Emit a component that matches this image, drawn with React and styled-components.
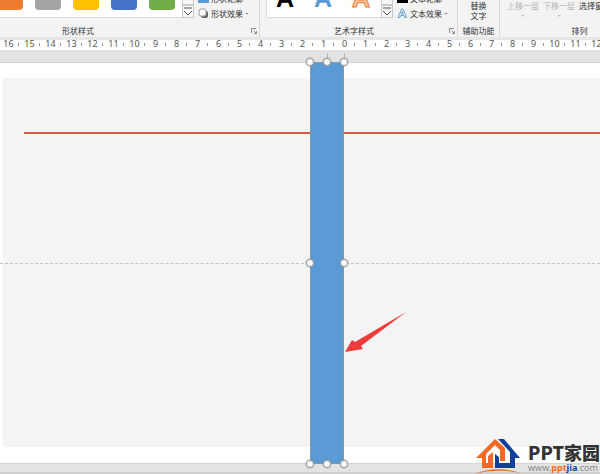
import styled, { createGlobalStyle } from "styled-components";

const GlobalStyle = createGlobalStyle`
  * {
    box-sizing: border-box;
  }
  body {
    margin: 0;
    font-family: "Liberation Sans", "Noto Sans CJK SC", sans-serif;
  }
`;

const Page = styled.div`
  height: 100vh;
  display: flex;
  flex-direction: column;
  position: relative;
  overflow: hidden;
  background-color: #e3e3e3;
`;

/* ribbon */
const Ribbon = styled.header`
  flex: none;
  display: flex;
  overflow: hidden;
  background-color: #f3f3f3;
  border-bottom: 3px solid #e6e6e6;
  font-family: "Noto Sans CJK SC", sans-serif;
  font-size: 8px;
  line-height: 11px;
  color: #333;
`;
const Group = styled.section`
  flex: 0 0 ${(props) => props.$width}px;
  display: flex;
  flex-direction: column;
  position: relative;
  padding-left: ${(props) => props.$pad || 0}px;
  border-right: 1px solid #d8d8d8;
`;
const GroupBody = styled.div`
  height: 19px;
  display: flex;
  align-items: flex-end;
  justify-content: ${(props) => (props.$center ? "center" : "flex-start")};
  gap: ${(props) => props.$gap || 0}px;
`;
const GroupFooter = styled.div`
  height: 18px;
  padding-top: 6px;
  text-align: center;
  margin-left: ${(props) => (props.$pull ? -props.$pull : 0)}px;
  margin-right: ${(props) => props.$end || 0}px;
`;
const Launcher = styled.button`
  position: absolute;
  right: 2px;
  bottom: 3px;
  width: 6px;
  height: 6px;
  padding: 0;
  border: none;
  background: none;
  display: flex;
`;
const Gallery = styled.div`
  flex: none;
  height: 40px;
  width: ${(props) => props.$width}px;
  margin-bottom: 1px;
  display: flex;
  align-items: flex-end;
  gap: 12px;
  padding: 0 0 ${(props) => props.$bottom}px ${(props) => props.$left}px;
  background-color: white;
  border: solid #dcdcdc;
  border-width: 0 0 1px ${(props) => (props.$edge ? 1 : 0)}px;
`;
const Swatch = styled.button`
  flex: none;
  width: 26px;
  height: 20px;
  padding: 0;
  border: none;
  border-radius: 4px;
  background-color: ${(props) => props.$color};
  &:first-child {
    margin-left: -3px;
  }
`;
const LetterButton = styled.button`
  width: 26px;
  height: 28px;
  padding: 0;
  border: none;
  background: none;
  font: bold 25px/28px "Liberation Sans", sans-serif;
  color: ${(props) => props.$color};
  -webkit-text-stroke: ${(props) => props.$stroke || "0"};
`;
const Scroller = styled.div`
  flex: none;
  width: 12px;
  height: 40px;
  margin-bottom: 1px;
  display: flex;
  flex-direction: column;
  justify-content: flex-end;
`;
const ScrollButton = styled.button`
  height: 13px;
  padding: 0;
  display: flex;
  align-items: center;
  justify-content: center;
  border: 1px solid #c9c9c9;
  background-color: #f6f6f6;
`;
const Commands = styled.div`
  display: flex;
  flex-direction: column;
  gap: 4px;
  padding-left: 4px;
`;
const Command = styled.button`
  display: flex;
  align-items: center;
  gap: 2px;
  height: 11px;
  padding: 0;
  border: none;
  background: none;
  font: inherit;
  color: #333;
  white-space: nowrap;
`;
const TallCommand = styled.button`
  flex: none;
  display: flex;
  flex-direction: column;
  align-items: center;
  height: 19px;
  padding: 1px 0 0;
  border: none;
  background: none;
  font: inherit;
  line-height: 10px;
  color: ${(props) => (props.disabled ? "#b4b4b4" : "#333")};
`;
const Caret = styled.span`
  width: 4px;
  height: 2px;
  margin-top: ${(props) => props.$top || 0}px;
  background-color: ${(props) => (props.$muted ? "#c4c4c4" : "#777")};
  clip-path: polygon(0 0, 100% 0, 50% 100%);
`;

/* ruler */
const Ruler = styled.div`
  flex: none;
  height: 10px;
  padding-bottom: 2px;
  display: flex;
  background-color: white;
  font: 9px/8px "Noto Sans", sans-serif;
  color: #555;
`;
const RulerUnit = styled.span`
  flex: 0 0 21px;
  display: flex;
  justify-content: center;
  align-items: center;
  position: relative;
  &:first-child {
    margin-left: -2px;
  }
  &::after {
    content: "";
    position: absolute;
    right: 0;
    width: 1px;
    height: 3px;
    background-color: #999;
  }
`;

/* slide */
const Workspace = styled.main`
  flex: 1;
  display: flex;
  flex-direction: column;
  padding: 12px 0 8px;
  border-bottom: 2px solid #cfcfcf;
`;
const Slide = styled.div`
  flex: 1;
  display: flex;
  position: relative;
  padding: 15px 0 16px 3px;
  background-color: white;
  border: solid #d2d2d2;
  border-width: 1px 0;
`;
const Panel = styled.div`
  flex: 1;
  background-color: #f4f4f4;
`;
const RedLine = styled.div`
  position: absolute;
  top: 69px;
  left: 24px;
  right: 0;
  height: 2px;
  background-color: #cf5d42;
`;
const Guide = styled.div`
  position: absolute;
  top: 50%;
  left: 0;
  right: 0;
  border-top: 1px dashed #c4c4c4;
`;
const Bar = styled.div`
  position: absolute;
  top: -1px;
  bottom: -1px;
  left: 310px;
  width: 34px;
  background-color: #5b9bd5;
  box-shadow: inset 0 0 0 1px #7f99b0;
`;
const Handle = styled.span`
  position: absolute;
  left: ${(props) => props.$x};
  top: ${(props) => props.$y};
  width: 8px;
  height: 8px;
  margin: -4px;
  border: 1px solid #999;
  box-shadow: 0 0 0 1px rgba(150, 150, 150, 0.35);
  border-radius: 50%;
  background-color: white;
`;
const Stem = styled.span`
  position: absolute;
  left: ${(props) => props.$x};
  top: -9px;
  width: 1px;
  height: 8px;
  background-color: #b5b5b5;
`;
const Arrow = styled.svg`
  position: absolute;
  left: 344px;
  top: 248px;
`;

/* watermark */
const Watermark = styled.a`
  position: absolute;
  right: 0;
  bottom: 0;
  display: flex;
  align-items: flex-end;
  gap: 6px;
  color: #333;
  text-decoration: none;
`;
const BrandText = styled.span`
  display: flex;
  flex-direction: column;
  padding-bottom: 1px;
`;
const BrandName = styled.strong`
  font: 900 18px/21px "Noto Sans CJK SC", sans-serif;
  white-space: nowrap;
`;
const BrandUrl = styled.span`
  font: 9px/10px "Noto Sans", sans-serif;
  color: #888;
`;
const UrlPart = styled.b`
  color: ${(props) => props.$color};
`;

const swatches = ["#ed7d31", "#a5a5a5", "#ffc000", "#4472c4", "#70ad47"];
const letters = [
  { color: "#000" },
  { color: "#5b9bd5" },
  { color: "#f8c3a0", stroke: "1px #ed7d31" },
];
const units = Array.from({ length: 29 }, (_, i) => Math.abs(i - 16));
const handles = [
  ["0%", "0%"],
  ["50%", "0%"],
  ["100%", "0%"],
  ["0%", "50%"],
  ["100%", "50%"],
  ["0%", "100%"],
  ["50%", "100%"],
  ["100%", "100%"],
];

const GalleryScroller = () => (
  <Scroller>
    <ScrollButton aria-label="下移" />
    <ScrollButton aria-label="其他">
      <svg width="10" height="10" viewBox="0 0 10 10" fill="none" stroke="#555">
        <path d="M1 1H9M1 4L5 8L9 4" />
      </svg>
    </ScrollButton>
  </Scroller>
);

const DialogLauncher = (props) => (
  <Launcher aria-label={props.label}>
    <svg width="6" height="6" viewBox="0 0 6 6" fill="none" stroke="#777">
      <path d="M.5 5V.5H5M2.5 2.5L5.5 5.5M5.5 3V5.5H3" strokeWidth=".8" />
    </svg>
  </Launcher>
);

const App = () => {
  return (
    <>
      <GlobalStyle />
      <Page>
        <Ribbon>
          <Group $width={260}>
            <GroupBody>
              <Gallery $width={182} $bottom={7} $left={0}>
                {swatches.map((color, i) => (
                  <Swatch
                    key={color}
                    $color={color}
                    aria-label={`样式 ${i + 1}`}
                  />
                ))}
              </Gallery>
              <GalleryScroller />
              <Commands>
                <Command>
                  <svg width="11" height="11" viewBox="0 0 11 11">
                    <path d="M1 7V1H8" fill="none" stroke="#777" />
                    <path d="M4 7L9 1" stroke="#5b9bd5" />
                    <path d="M0 7H11V10H0Z" fill="#5b9bd5" />
                  </svg>
                  形状轮廓
                  <Caret />
                </Command>
                <Command>
                  <svg width="11" height="11" viewBox="0 0 11 11">
                    <rect x="3" y="3" width="7" height="7" rx="2" fill="#666" />
                    <rect
                      x="1"
                      y="1"
                      width="7"
                      height="7"
                      rx="2"
                      fill="#fff"
                      stroke="#999"
                    />
                  </svg>
                  形状效果
                  <Caret />
                </Command>
              </Commands>
            </GroupBody>
            <GroupFooter $end={103}>形状样式</GroupFooter>
            <DialogLauncher label="形状样式设置" />
          </Group>

          <Group $width={198} $pad={6}>
            <GroupBody>
              <Gallery $width={115} $bottom={5} $left={5} $edge>
                {letters.map((l) => (
                  <LetterButton key={l.color} $color={l.color} $stroke={l.stroke}>
                    A
                  </LetterButton>
                ))}
              </Gallery>
              <GalleryScroller />
              <Commands>
                <Command>
                  <svg width="11" height="11" viewBox="0 0 11 11">
                    <path d="M2 7L5 0L8 7" fill="none" stroke="#555" />
                    <path d="M0 6H11V10H0Z" fill="#000" />
                  </svg>
                  文本轮廓
                  <Caret />
                </Command>
                <Command>
                  <svg width="11" height="11" viewBox="0 0 11 11">
                    <path
                      d="M1 9.5L4.500 1H6L9.500 9.500H7.500L6.800 7.500H3.800L3 9.500ZM4.300 6H6.200L5.200 3.500Z"
                      fill="#e4f0fa"
                      stroke="#5b9bd5"
                      strokeWidth=".9"
                    />
                  </svg>
                  文本效果
                  <Caret />
                </Command>
              </Commands>
            </GroupBody>
            <GroupFooter $pull={6} $end={9}>
              艺术字样式
            </GroupFooter>
            <DialogLauncher label="艺术字样式设置" />
          </Group>

          <Group $width={42}>
            <GroupBody $center>
              <TallCommand>
                <span>替换</span>
                <span>文字</span>
              </TallCommand>
            </GroupBody>
            <GroupFooter>辅助功能</GroupFooter>
          </Group>

          <Group $width={160} $pad={7}>
            <GroupBody $gap={4}>
              <TallCommand disabled>
                上移一层
                <Caret $top={4} $muted />
              </TallCommand>
              <TallCommand disabled>
                下移一层
                <Caret $top={4} $muted />
              </TallCommand>
              <TallCommand>选择窗格</TallCommand>
            </GroupBody>
            <GroupFooter $pull={7}>排列</GroupFooter>
          </Group>
        </Ribbon>

        <Ruler>
          {units.map((unit, i) => (
            <RulerUnit key={i}>{unit}</RulerUnit>
          ))}
        </Ruler>

        <Workspace>
          <Slide>
            <Panel />
            <RedLine />
            <Guide />
            <Bar>
              <Stem $x="50%" />
              <Stem $x="100%" />
              {handles.map(([x, y]) => (
                <Handle key={x + y} $x={x} $y={y} />
              ))}
            </Bar>
            <Arrow width="63" height="42" viewBox="0 0 63 42">
              <path d="M62 1L17 35L19 38L1 41L8 29L11 31Z" fill="#ee3b3b" />
            </Arrow>
          </Slide>
        </Workspace>

        <Watermark href="#">
          <svg width="48" height="38" viewBox="0 0 48 38">
            <path
              d="M24 3H30L46 22H41V32H21V18L25 21V27H36V16Z"
              fill="#123f9c"
            />
            <path
              d="M2 22L21 3L31 12V25H26V14L21 9L12 18V27H14V20L19 16V32H8V22Z"
              fill="#f26a21"
            />
            <path d="M0 38Q22 29 47 37Q22 32 0 38Z" fill="#f26a21" />
          </svg>
          <BrandText>
            <BrandName>PPT家园</BrandName>
            <BrandUrl>
              www.<UrlPart $color="#f26a21">ppt</UrlPart>
              <UrlPart $color="#123f9c">jia</UrlPart>.com
            </BrandUrl>
          </BrandText>
        </Watermark>
      </Page>
    </>
  );
};

export default App;
